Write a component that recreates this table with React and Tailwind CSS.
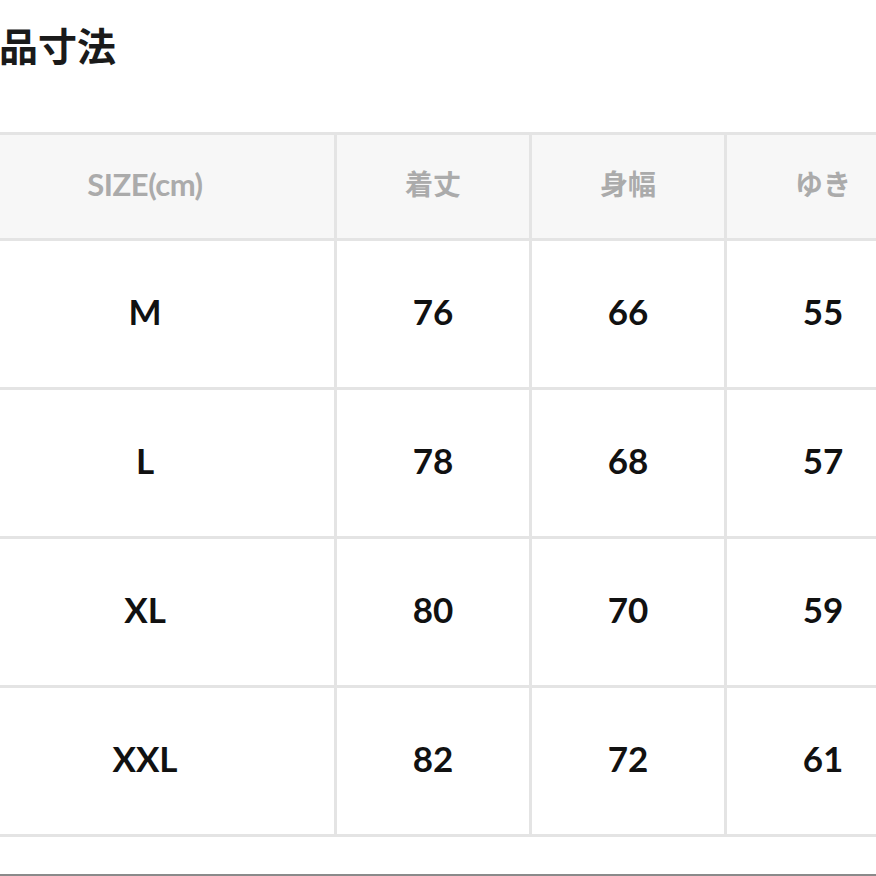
const HEADERS = ['SIZE(cm)', '着丈', '身幅', 'ゆき']

const ROWS = [
  ['M', '76', '66', '55'],
  ['L', '78', '68', '57'],
  ['XL', '80', '70', '59'],
  ['XXL', '82', '72', '61'],
]

const font = { fontFamily: 'Lato, "Noto Sans CJK JP", sans-serif' }

export default function App() {
  return (
    <div
      className="relative h-[876px] w-[876px] overflow-hidden border-b-2 border-[#8a8a8a] bg-white"
      style={font}
    >
      <h1 className="ml-[-1px] pt-[27px] text-[39px] font-bold leading-[39px] text-[#1a1a1a]">
        品寸法
      </h1>

      <div className="ml-[-47px] mt-[66px] grid w-max grid-cols-[378px_192px_192px_192px] gap-[3px] bg-[#e4e4e4] p-[3px]">
        {HEADERS.map((h, i) => (
          <div
            key={h}
            className={`flex h-[103px] items-center justify-center bg-[#f7f7f7] pb-[5px] font-bold text-[#ababab] ${
              i === 0 ? 'text-[31px] tracking-[-0.5px]' : 'text-[28px]'
            }`}
          >
            {h}
          </div>
        ))}
        {ROWS.map((row) =>
          row.map((cell, i) => (
            <div
              key={row[0] + i}
              className="flex h-[146px] items-center justify-center bg-white pb-[5px] text-[35px] font-bold text-[#111]"
            >
              {cell}
            </div>
          )),
        )}
      </div>
    </div>
  )
}
